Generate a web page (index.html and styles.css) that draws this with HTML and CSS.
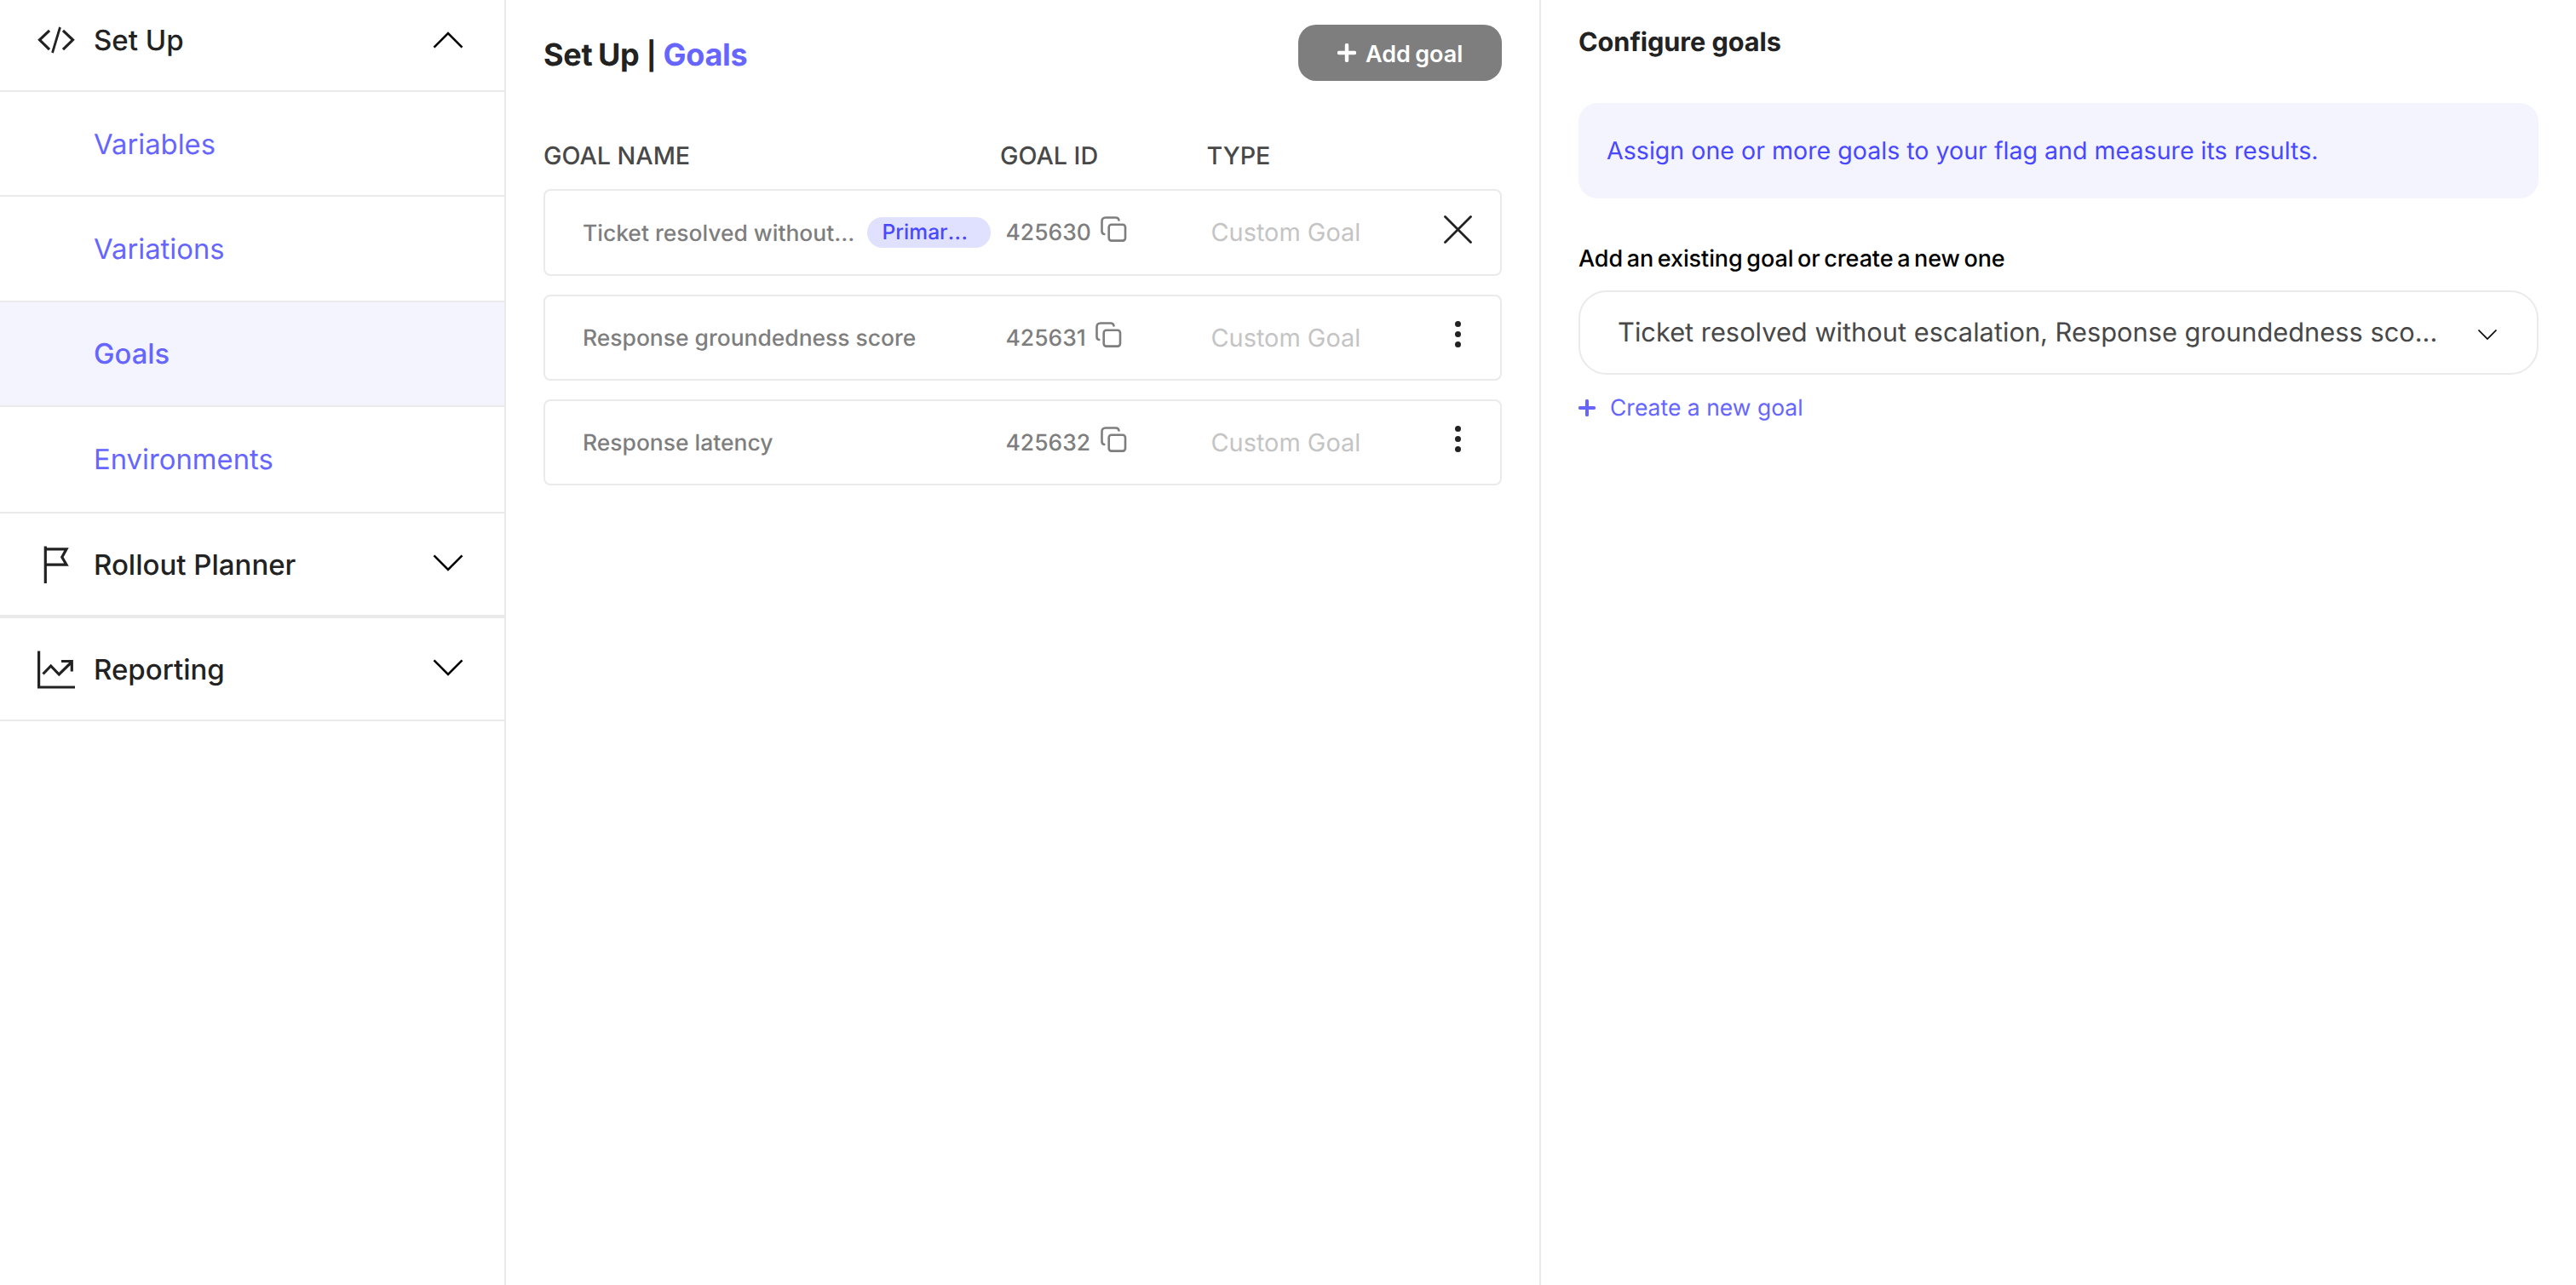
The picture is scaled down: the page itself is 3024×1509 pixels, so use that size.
FILE: index.html
```html
<!DOCTYPE html>
<html lang="en">
<head>
<meta charset="utf-8">
<title>Set Up | Goals</title>
<link rel="stylesheet" href="styles.css">
</head>
<body>
<svg class="defs" width="0" height="0" aria-hidden="true">
  <symbol id="chevron-down" viewBox="0 0 36 20"><path d="M1.5 1.3 18 18 34.500 1.300"/></symbol>
  <symbol id="copy" viewBox="0 0 31 30"><path d="M21.500 4.500C21 2.400 19.800 1.500 18 1.500H6C3 1.500 1.500 3 1.500 6V17.500C1.500 19.500 2.500 20.600 4.300 21"/><rect x="9.700" y="9.700" width="19.300" height="18.900" rx="3"/></symbol>
  <symbol id="dots" viewBox="0 0 33 33"><circle cx="16.500" cy="4.500" r="3.500"/><circle cx="16.500" cy="16.500" r="3.500"/><circle cx="16.500" cy="28.500" r="3.500"/></symbol>
  <symbol id="plus" viewBox="0 0 22 22"><path d="M11 2v18M2 11h18"/></symbol>
</svg>
<div class="app">
  <nav class="sidebar">
    <div class="section section-first">
      <svg class="nav-icon" width="44" height="48" viewBox="0 0 44 48"><path d="M14 12.800 2.500 23.800 14 35.200M30 12.800 41.500 23.800 30 35.200"/><path class="thin" d="M26.500 9 17.500 39"/></svg>
      <span>Set Up</span>
      <svg class="toggle open" width="36" height="20"><use href="#chevron-down"/></svg>
    </div>
    <a class="link">Variables</a>
    <a class="link">Variations</a>
    <a class="link active">Goals</a>
    <a class="link link-last">Environments</a>
    <div class="section section-thick">
      <svg class="nav-icon" width="44" height="48" viewBox="0 0 44 48"><path d="M9.300 2.500V46M9.300 5.800H34L28.800 15.200 34 24.200H9.300"/></svg>
      <span>Rollout Planner</span>
      <svg class="toggle" width="36" height="20"><use href="#chevron-down"/></svg>
    </div>
    <div class="section">
      <svg class="nav-icon" width="44" height="48" viewBox="0 0 44 48"><path d="M1.600 2.500V45H44"/><path d="M6.500 29.500 15.700 20 25.300 30 40 15.500M28 14.500H40.300V26.500"/></svg>
      <span>Reporting</span>
      <svg class="toggle" width="36" height="20"><use href="#chevron-down"/></svg>
    </div>
  </nav>

  <main class="main">
    <header class="main-head">
      <h1 class="title">Set Up <span class="bar">|</span> <span class="accent">Goals</span></h1>
      <button class="add"><svg width="22" height="22"><use href="#plus"/></svg><span>Add goal</span></button>
    </header>
    <div class="columns"><span>GOAL NAME</span><span>GOAL ID</span><span>TYPE</span></div>
    <div class="rows">
      <div class="row row-primary">
        <div class="name"><span class="name-text">Ticket resolved without...</span><span class="badge">Primar<span class="ell">...</span></span></div>
        <div class="id">425630<svg class="copy" width="31" height="30"><use href="#copy"/></svg></div>
        <div class="type">Custom Goal</div>
        <svg class="close" width="33" height="33" viewBox="0 0 33 33"><path d="M1.500 1.500 31.500 31.500M31.500 1.500 1.500 31.500"/></svg>
      </div>
      <div class="row">
        <div class="name">Response groundedness score</div>
        <div class="id">425631<svg class="copy" width="31" height="30"><use href="#copy"/></svg></div>
        <div class="type">Custom Goal</div>
        <svg class="more" width="33" height="33"><use href="#dots"/></svg>
      </div>
      <div class="row">
        <div class="name">Response latency</div>
        <div class="id">425632<svg class="copy" width="31" height="30"><use href="#copy"/></svg></div>
        <div class="type">Custom Goal</div>
        <svg class="more" width="33" height="33"><use href="#dots"/></svg>
      </div>
    </div>
  </main>

  <aside class="config">
    <h2 class="config-title">Configure goals</h2>
    <p class="banner">Assign one or more goals to your flag and measure its results.</p>
    <label class="label">Add an existing goal or create a new one</label>
    <div class="select">
      <span>Ticket resolved without escalation, Response groundedness sco...</span>
      <svg width="24" height="14" viewBox="0 0 24 14"><path d="M1.500 1.500 12 12 22.500 1.500"/></svg>
    </div>
    <a class="create"><svg width="20" height="20"><use href="#plus"/></svg><span>Create a new goal</span></a>
  </aside>
</div>
</body>
</html>
```
FILE: styles.css
```css
* { box-sizing: border-box; }

body {
  margin: 0;
  background: #fff;
  color: #222;
  font-family: Inter, "Liberation Sans", sans-serif;
  text-rendering: geometricPrecision;
}

svg { flex: none; fill: none; stroke-linejoin: miter; }
.defs { display: none; }

.app {
  display: grid;
  grid-template-columns: 594px 1215px 1fr;
  height: 1509px;
  overflow: hidden;
}

/* Sidebar */
.sidebar {
  border-right: 2px solid #eaeaea;
  font-size: 32.8px;
  line-height: 44px;
}
.section {
  display: flex;
  align-items: center;
  height: 121px;
  padding: 0 48px 0 44px;
  border-bottom: 2px solid #eaeaea;
  font-size: 33px;
  font-weight: 500;
}
.section span { margin-left: 22px; }
.section-first { height: 108px; padding-bottom: 12px; }
.section-thick { height: 123px; border-bottom-width: 4px; }
.nav-icon { stroke: #222; stroke-width: 3.2; }
.thin { stroke-width: 2.8; }
.toggle {
  margin-left: auto;
  margin-bottom: 3px;
  stroke: #000;
  stroke-width: 2.6;
}
.toggle.open { margin-bottom: 1px; transform: rotate(180deg); }
.link {
  display: flex;
  align-items: center;
  height: 123px;
  padding: 0 0 0 110px;
  border-bottom: 2px solid #eaeaea;
  color: #6666ff;
}
.link.active { padding-bottom: 1px; background: #f4f4ff; font-weight: 500; }
.link:nth-of-type(2) { height: 124px; padding-bottom: 1px; }
.link-last { height: 125px; padding-bottom: 2px; }

/* Goal list */
.main {
  padding: 29px 44px 0;
  border-right: 2px solid #eaeaea;
}
.main-head {
  display: flex;
  justify-content: space-between;
  height: 66px;
}
.title {
  margin: 0;
  padding-top: 2px;
  font-size: 36px;
  line-height: 66px;
  font-weight: 700;
  letter-spacing: -0.3px;
  word-spacing: -1.5px;
}
.bar { margin: 0 1.5px; font-size: 32px; }
.accent { color: #6666ff; }
.add {
  display: flex;
  align-items: center;
  width: 239px;
  padding: 0 0 0 46px;
  border: 0;
  border-radius: 21px;
  background: #7e7e7e;
  color: #fff;
  font: 600 27px/40px Inter, sans-serif;
  word-spacing: -1.5px;
}
.add svg { stroke: #fff; stroke-width: 4.4; stroke-linecap: round; }
.add span { margin-left: 11px; padding-top: 3px; }
.columns {
  display: grid;
  grid-template-columns: 536px 242.5px 1fr;
  margin-top: 68px;
  color: #484848;
  font-size: 28.7px;
  line-height: 40px;
  font-weight: 500;
}
.rows {
  display: flex;
  flex-direction: column;
  gap: 22px;
  margin-top: 19px;
}
.row {
  display: grid;
  grid-template-columns: 496px 241.500px 1fr 33px;
  align-items: center;
  height: 101px;
  padding: 0 33px 0 44px;
  border: 2px solid #eaeaea;
  border-radius: 8px;
  color: #7e7e7e;
  font-size: 26.45px;
  line-height: 36px;
  font-weight: 500;
}
.row-primary { height: 102px; }
.name { display: flex; align-items: center; }
.name-text { width: 334px; padding-top: 1px; }
.badge {
  width: 145px;
  height: 36px;
  padding-left: 17.5px;
  border-radius: 18px;
  background: #e0e0ff;
  color: #4848ff;
  font-size: 24.6px;
  line-height: 35px;
}
.ell { letter-spacing: 0.5px; }
.id { display: flex; align-items: center; padding-left: 0.5px; }
.copy {
  margin: 0 0 8px 11.5px;
  stroke: #7e7e7e;
  stroke-width: 2.6;
  stroke-linecap: round;
}
.type {
  color: #c4c4c4;
  font-size: 28.9px;
  font-weight: 400;
}
.close {
  margin-bottom: 7px;
  stroke: #222;
  stroke-width: 2.8;
  stroke-linecap: round;
}
.more { margin-bottom: 8px; fill: #222; }

/* Goal configuration */
.config { padding: 30px 44px 0; }
.config-title {
  margin: 0;
  font-size: 30.7px;
  line-height: 40px;
  font-weight: 700;
  letter-spacing: -0.08px;
}
.banner {
  margin: 51px 0 0;
  padding-left: 33px;
  border-radius: 22px;
  background: #f4f4ff;
  color: #4848ff;
  font-size: 28.6px;
  line-height: 112px;
}
.label {
  display: block;
  margin-top: 51px;
  color: #000;
  font-size: 27px;
  line-height: 40px;
  font-weight: 500;
  letter-spacing: -0.1px;
  word-spacing: -2.4px;
}
.select {
  display: flex;
  align-items: center;
  justify-content: space-between;
  height: 99px;
  margin-top: 17px;
  padding: 0 46px 0 44px;
  border: 2px solid #eaeaea;
  border-radius: 33px;
  color: #484848;
  font-size: 30.8px;
  line-height: 40px;
}
.select span { padding-top: 1px; }
.select svg { margin-top: 4px; stroke: #000; stroke-width: 1.7; }
.create {
  display: flex;
  align-items: center;
  margin-top: 18px;
  color: #6666ff;
  font-size: 26.5px;
  line-height: 40px;
}
.create svg { stroke: #6666ff; stroke-width: 4.4; stroke-linecap: round; }
.create span { margin-left: 17px; padding-top: 1px; }
```
